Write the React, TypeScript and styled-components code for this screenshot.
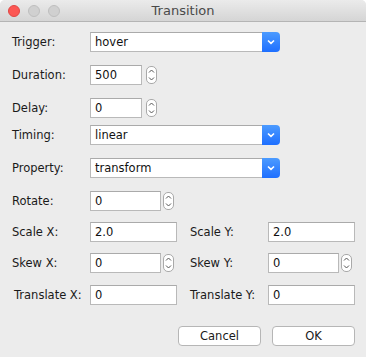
import React from "react";
import styled, { createGlobalStyle } from "styled-components";

const GlobalStyle = createGlobalStyle`
    html, body {
        margin: 0;
        padding: 0;
        background: #ffffff;
    }
    body {
        font-family: "DejaVu Sans", "Liberation Sans", sans-serif;
    }
`;

const Window = styled.div`
    width: 366px;
    height: 357px;
    background: #ececec;
    border-radius: 5px 5px 0 0;
    overflow: hidden;
    display: flex;
    flex-direction: column;
`;

const TitleBar = styled.div`
    height: 21px;
    border-bottom: 1px solid #b4b4b4;
    background: linear-gradient(#ebebeb, #d5d5d5);
    display: flex;
    align-items: center;
    position: relative;
`;

const Lights = styled.div`
    display: flex;
    gap: 8px;
    padding-left: 8px;
`;

const Light = styled.span<{ $red?: boolean }>`
    width: 12px;
    height: 12px;
    border-radius: 50%;
    box-sizing: border-box;
    background: ${(p) => (p.$red ? "#fc5753" : "#d0d0d0")};
    border: 1px solid ${(p) => (p.$red ? "#df4744" : "#bebebe")};
`;

const Title = styled.div`
    position: absolute;
    left: 0;
    right: 0;
    text-align: center;
    font-size: 13px;
    color: #4a4a4a;
    pointer-events: none;
`;

const Body = styled.div`
    display: flex;
    flex-direction: column;
    padding: 10px 0 0 12px;
`;

const Row = styled.div<{ $top: number }>`
    display: flex;
    align-items: center;
    height: 20px;
    margin-top: ${(p) => p.$top}px;
`;

const Cell = styled.div`
    display: flex;
    align-items: center;
    width: 178px;
    flex-shrink: 0;
`;

const Label = styled.label<{ $indent?: number }>`
    width: 78px;
    flex-shrink: 0;
    padding-left: ${(p) => p.$indent || 0}px;
    box-sizing: border-box;
    font-size: 11.5px;
    color: #1a1a1a;
    white-space: nowrap;
`;

const Field = styled.div<{ $width: number }>`
    width: ${(p) => p.$width}px;
    height: 20px;
    flex-shrink: 0;
    box-sizing: border-box;
    background: #ffffff;
    border: 1px solid #b9b9b9;
    border-top-color: #aaaaaa;
    padding-left: 4px;
    display: flex;
    align-items: center;
    font-size: 11.5px;
    color: #111111;
`;

const Combo = styled.div`
    width: 190px;
    height: 20px;
    display: flex;
`;

const ComboField = styled(Field)`
    flex: 1;
    border-right: none;
`;

const ComboButton = styled.div`
    width: 18px;
    height: 20px;
    border-radius: 0 4px 4px 0;
    background: linear-gradient(#4c9bff, #1e6fff);
    display: flex;
    align-items: center;
    justify-content: center;
`;

const Spinner = styled.div<{ $gap: number }>`
    width: 11px;
    height: 18px;
    flex-shrink: 0;
    margin-left: ${(p) => p.$gap}px;
    box-sizing: border-box;
    border: 1px solid #a9a9a9;
    border-radius: 5px;
    background: #ffffff;
    display: flex;
    align-items: center;
    justify-content: center;
`;

const Footer = styled.div`
    display: flex;
    justify-content: flex-end;
    gap: 11px;
    margin-top: 21px;
    padding-right: 11px;
`;

const Button = styled.button`
    width: 83px;
    height: 20px;
    box-sizing: border-box;
    background: #ffffff;
    border: 1px solid #b6b6b6;
    border-radius: 4px;
    font-family: inherit;
    font-size: 11.5px;
    color: #1a1a1a;
    padding: 0;
`;

const Chevron = () => (
    <svg width="8" height="6" viewBox="0 0 8 6">
        <path d="M1 1.5 L4 4.3 L7 1.5" fill="none" stroke="#ffffff" strokeWidth="1.6" />
    </svg>
);

const Arrows = () => (
    <svg width="7" height="14" viewBox="0 0 7 14">
        <path d="M1 4.5 L3.5 2 L6 4.5" fill="none" stroke="#555" strokeWidth="1" />
        <path d="M1 9.5 L3.5 12 L6 9.5" fill="none" stroke="#555" strokeWidth="1" />
    </svg>
);

type SelectProps = { label: string; value: string; top: number };

const SelectRow = ({ label, value, top }: SelectProps) => (
    <Row $top={top}>
        <Label>{label}</Label>
        <Combo>
            <ComboField $width={172}>{value}</ComboField>
            <ComboButton>
                <Chevron />
            </ComboButton>
        </Combo>
    </Row>
);

type NumProps = { label: string; value: string; width: number; gap: number; indent?: number };

const NumberCell = ({ label, value, width, gap, indent }: NumProps) => (
    <Cell>
        <Label $indent={indent}>{label}</Label>
        <Field $width={width}>{value}</Field>
        {gap > 0 && (
            <Spinner $gap={gap}>
                <Arrows />
            </Spinner>
        )}
    </Cell>
);

const App = () => {
    return (
        <Window>
            <GlobalStyle />
            <TitleBar>
                <Lights>
                    <Light $red />
                    <Light />
                    <Light />
                </Lights>
                <Title>Transition</Title>
            </TitleBar>
            <Body>
                <SelectRow label="Trigger:" value="hover" top={0} />
                <Row $top={13}>
                    <NumberCell label="Duration:" value="500" width={52} gap={4} />
                </Row>
                <Row $top={13}>
                    <NumberCell label="Delay:" value="0" width={52} gap={4} />
                </Row>
                <SelectRow label="Timing:" value="linear" top={7} />
                <SelectRow label="Property:" value="transform" top={13} />
                <Row $top={13}>
                    <NumberCell label="Rotate:" value="0" width={71} gap={2} />
                </Row>
                <Row $top={11}>
                    <NumberCell label="Scale X:" value="2.0" width={87} gap={0} />
                    <NumberCell label="Scale Y:" value="2.0" width={87} gap={0} />
                </Row>
                <Row $top={11}>
                    <NumberCell label="Skew X:" value="0" width={71} gap={2} />
                    <NumberCell label="Skew Y:" value="0" width={71} gap={2} />
                </Row>
                <Row $top={12}>
                    <NumberCell label="Translate X:" value="0" width={87} gap={0} indent={2} />
                    <NumberCell label="Translate Y:" value="0" width={87} gap={0} />
                </Row>
                <Footer>
                    <Button>Cancel</Button>
                    <Button>OK</Button>
                </Footer>
            </Body>
        </Window>
    );
};

export default App;
